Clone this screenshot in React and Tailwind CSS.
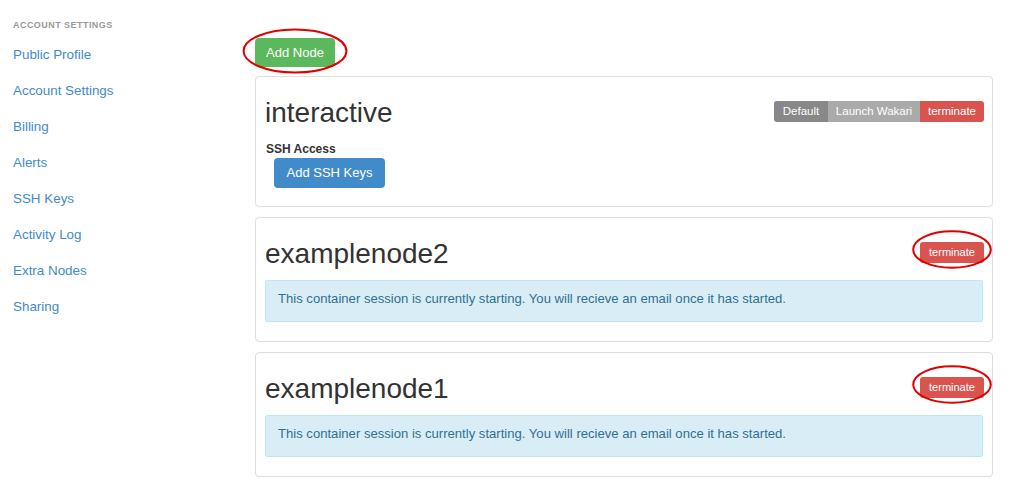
const navLinks = ['Public Profile', 'Account Settings', 'Billing', 'Alerts', 'SSH Keys', 'Activity Log', 'Extra Nodes', 'Sharing'];

const startingMsg = 'This container session is currently starting. You will recieve an email once it has started.';

// hand-drawn red annotation ring
function Ring({ className }) {
  return (
    <svg className={`pointer-events-none absolute ${className}`} viewBox="0 0 100 50" preserveAspectRatio="none" fill="none">
      <ellipse cx="50" cy="25" rx="48.5" ry="23.5" stroke="#e00000" strokeWidth="2" vectorEffect="non-scaling-stroke" />
    </svg>
  );
}

function TerminateButton({ circled }) {
  return (
    <div className="relative mr-[-1px] mt-[1px]">
      <button className="w-[64px] rounded-[3px] bg-[#d9534f] py-[2px] text-center text-[11px] leading-[17px] text-white">terminate</button>
      {circled && <Ring className="-left-[8px] -top-[9px] h-[39px] w-[80px]" />}
    </div>
  );
}

function NodeCard({ name, children, actions, className = 'pb-[19px]' }) {
  return (
    <div className={`rounded-[4px] border border-[#dddddd] bg-white px-[9px] pt-[20px] ${className}`}>
      <div className="flex items-start justify-between">
        <h2 className="text-[28px] leading-[31px] text-[#333333]">{name}</h2>
        {actions}
      </div>
      {children}
    </div>
  );
}

function StartingAlert() {
  return (
    <div className="mt-[11px] rounded-[2px] border border-[#bce8f1] bg-[#d9edf7] px-[12px] pt-[9px] pb-[13px] text-[13.1px] leading-[18px] text-[#31708f]">
      {startingMsg}
    </div>
  );
}

export default function App() {
  return (
    <div className="flex min-h-screen bg-white font-['Liberation_Sans',Arial,sans-serif] text-[#333333]">
      <aside className="w-[240px] shrink-0 pl-[13px] pt-[19px]">
        <div className="text-[9px] font-bold uppercase tracking-[0.45px] text-[#999999]">Account Settings</div>
        <nav className="mt-[4px] flex flex-col">
          {navLinks.map((l) => (
            <a key={l} className="py-[9px] text-[13.4px] leading-[18px] text-[#428bca]">{l}</a>
          ))}
        </nav>
      </aside>

      <main className="flex-1 pt-[38px] pl-[15px] pr-[20px]">
        <div className="relative inline-block">
          <button className="h-[29px] w-[80px] rounded-[4px] bg-[#5cb85c] text-[13px] text-white">Add Node</button>
          <Ring className="-left-[13px] -top-[10px] h-[46px] w-[106px]" />
        </div>

        <div className="mt-[9px] flex flex-col gap-[10px]">
          <NodeCard
            name="interactive"
            className="pb-[18px]"
            actions={
              <div className="mr-[-1px] mt-[4px] flex overflow-hidden rounded-[3px] text-[11.5px] leading-[17px] text-white">
                <span className="w-[54px] bg-[#888888] py-[2px] text-center">Default</span>
                <span className="w-[92px] bg-[#aaaaaa] py-[2px] text-center">Launch Wakari</span>
                <span className="w-[64px] bg-[#d9534f] py-[2px] text-center">terminate</span>
              </div>
            }
          >
            <div className="mt-[13px] pl-[1px] text-[12px] font-bold leading-[16px]">SSH Access</div>
            <button className="mt-[1px] ml-[9px] h-[30px] w-[111px] rounded-[4px] bg-[#428bca] text-[13px] text-white">Add SSH Keys</button>
          </NodeCard>

          <NodeCard name="examplenode2" actions={<TerminateButton circled />}>
            <StartingAlert />
          </NodeCard>

          <NodeCard name="examplenode1" actions={<TerminateButton circled />}>
            <StartingAlert />
          </NodeCard>
        </div>
      </main>
    </div>
  );
}
